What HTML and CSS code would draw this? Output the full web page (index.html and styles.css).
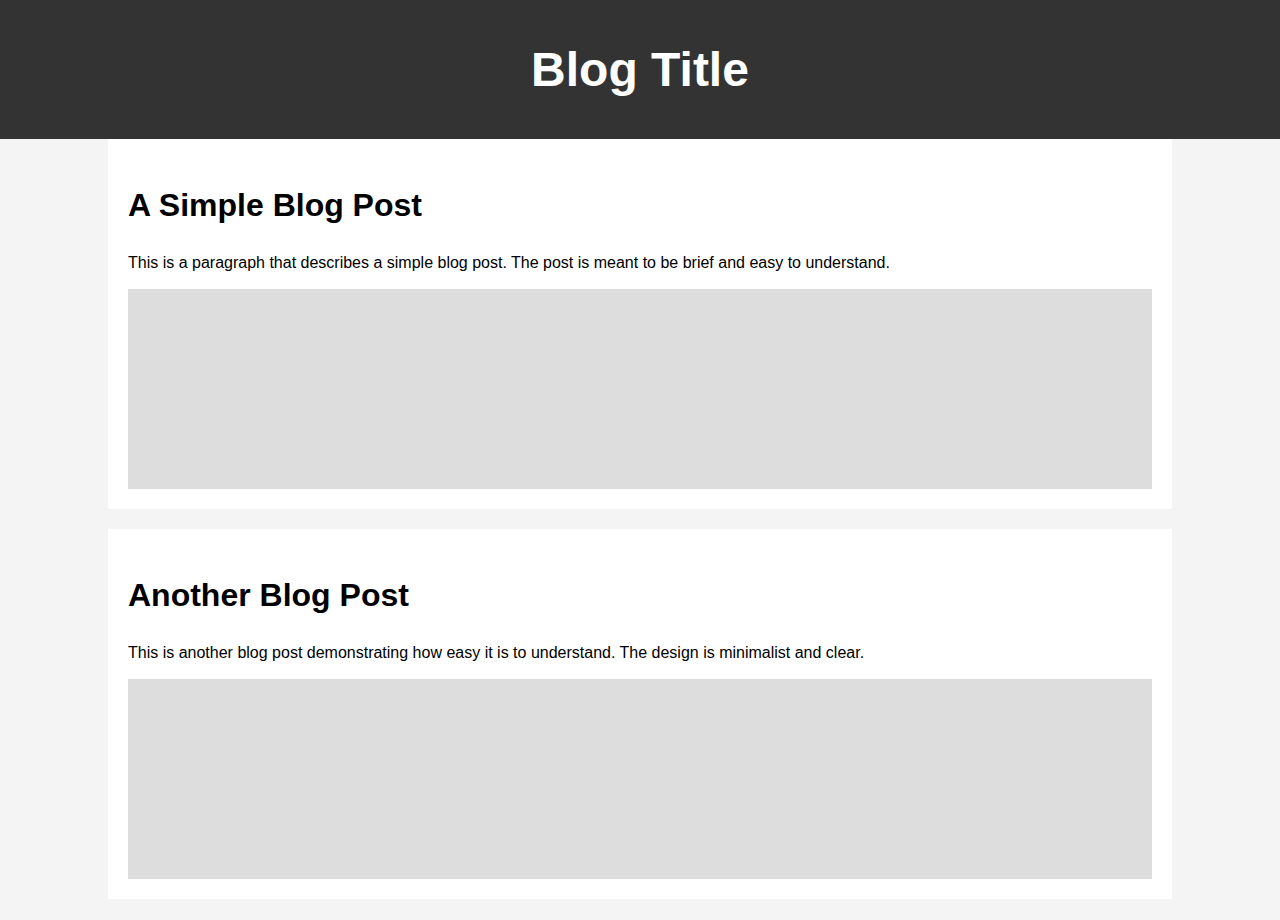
FILE: index.html
```html
<!DOCTYPE html>
<html lang="en">
<head>
<meta charset="utf-8">
<title>Blog</title>
<link rel="stylesheet" href="styles.css">
</head>
<body>
<header class="site-header">
  <h1 class="site-title">Blog Title</h1>
</header>
<main class="posts">
  <article class="post">
    <h2 class="post-title">A Simple Blog Post</h2>
    <p class="post-text">This is a paragraph that describes a simple blog post. The post is meant to be brief and easy to understand.</p>
    <div class="post-image"></div>
  </article>
  <article class="post">
    <h2 class="post-title">Another Blog Post</h2>
    <p class="post-text">This is another blog post demonstrating how easy it is to understand. The design is minimalist and clear.</p>
    <div class="post-image"></div>
  </article>
</main>
</body>
</html>
```
FILE: styles.css
```css
body {
  margin: 0;
  background: #f4f4f4;
  font-family: "Liberation Sans", Arial, sans-serif;
  color: #000;
}

.site-header {
  background: #333;
  color: #fff;
  text-align: center;
  padding: 10px 0;
}

.site-title {
  margin: 32px 0;
  font-size: 48px;
  line-height: normal;
  font-weight: bold;
}

.posts {
  display: flex;
  flex-direction: column;
  gap: 20px;
  max-width: 1064px;
  margin: 0 auto;
}

.post {
  background: #fff;
  padding: 20px;
}

.post-title {
  margin: 28px 0 26px;
  font-size: 32px;
  line-height: normal;
  font-weight: bold;
}

.post-text {
  margin: 0 0 13.6px;
  font-size: 16px;
  line-height: 1.6;
}

.post-image {
  height: 200px;
  background: #ddd;
}
```
